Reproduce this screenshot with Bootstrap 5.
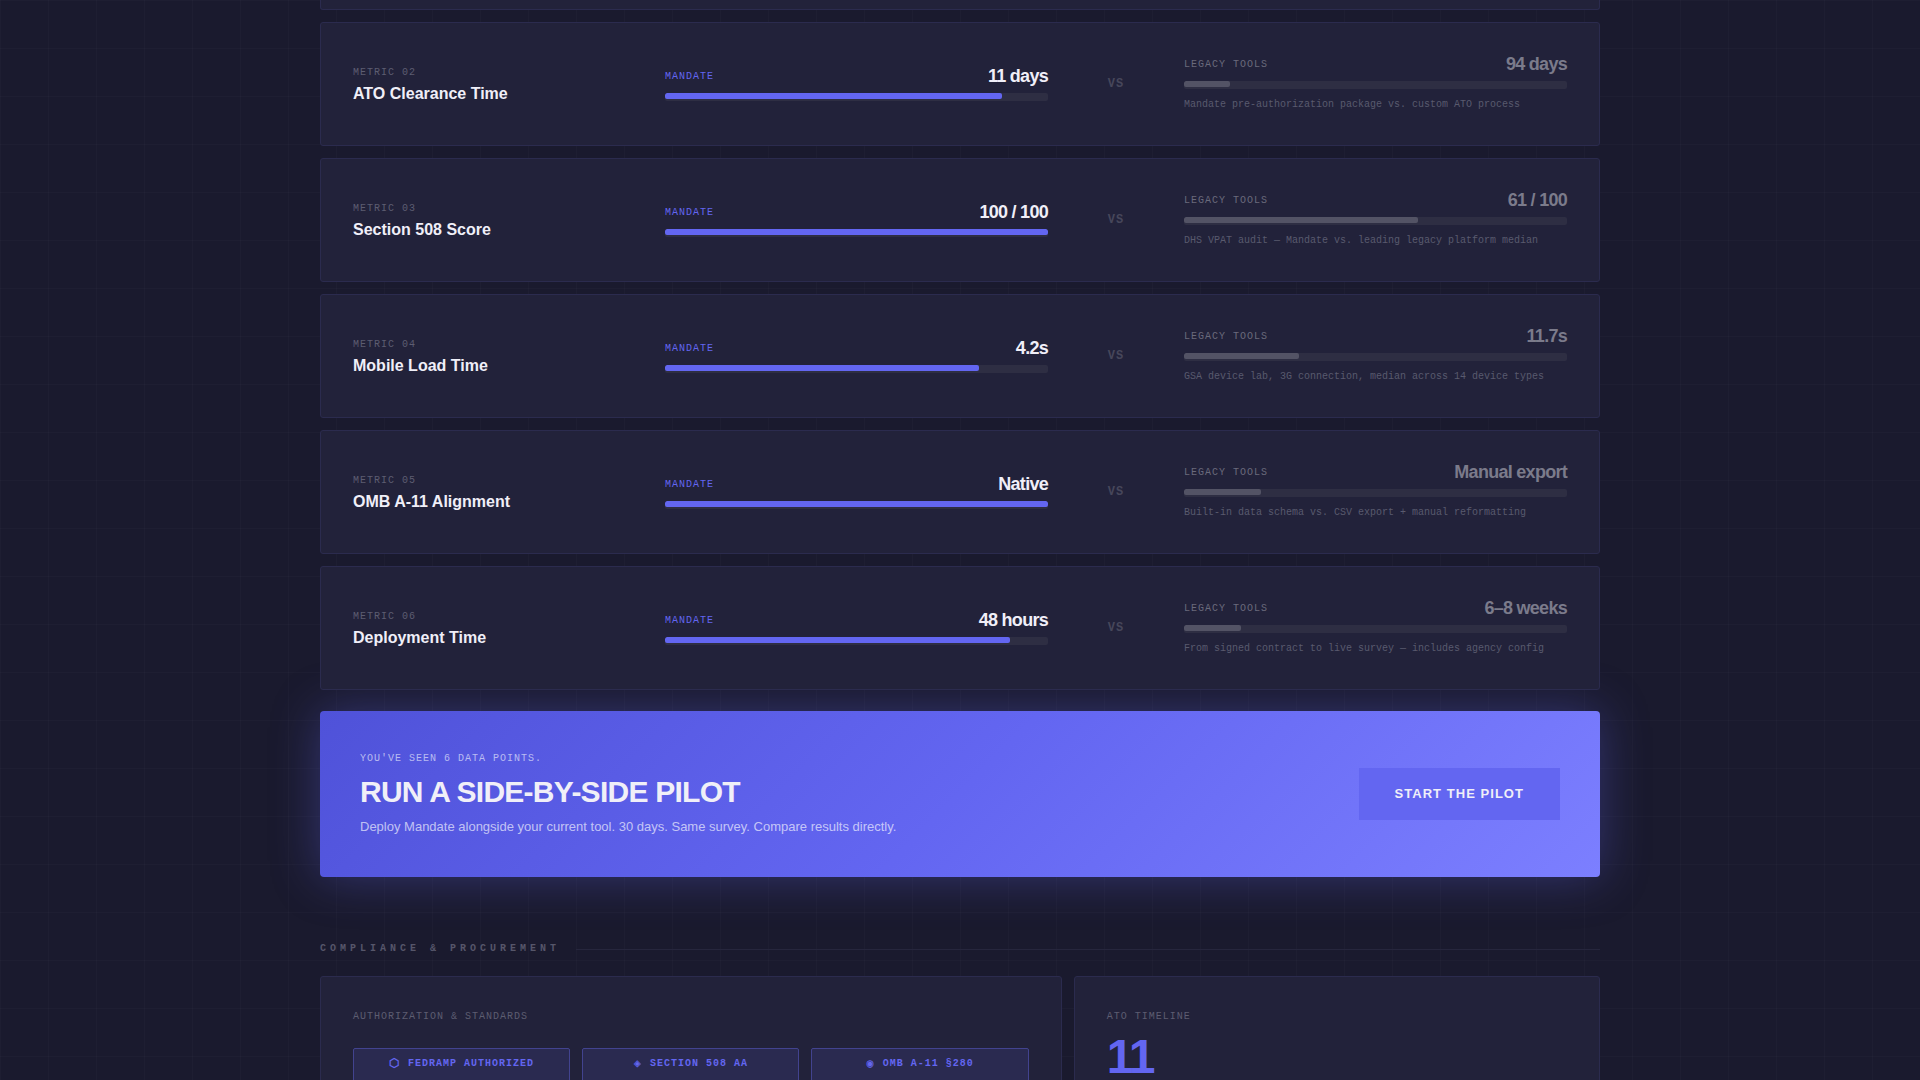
<!DOCTYPE html>
<html lang="en">
<head>
<meta charset="utf-8">
<meta name="viewport" content="width=device-width, initial-scale=1">
<title>Mandate – Benchmarks</title>
<link href="https://cdn.jsdelivr.net/npm/bootstrap@5.3.0/dist/css/bootstrap.min.css" rel="stylesheet">
<style>
  :root { --accent: #6366f1; --ink: #f0eff8; --panel: #22223a; --edge: #2b2b4e; }
  body {
    color: var(--ink);
    background-color: #1a1a2e;
    background-image:
      linear-gradient(rgba(255,255,255,.02) 1px, transparent 1px),
      linear-gradient(90deg, rgba(255,255,255,.02) 1px, transparent 1px);
    background-size: 48px 48px;
    font-family: "Liberation Sans", Arial, sans-serif;
    font-size: 16px;
    line-height: 1.6;
    height: 100vh;
    overflow: hidden;
  }
  .page { max-width: 1280px; }
  .mono { font-family: "Liberation Mono", "Courier New", monospace; font-size: 10px; line-height: 16px; }
  .spaced { letter-spacing: 1px; }
  .dim { color: #5d5d71; }
  .panel { background: var(--panel); border: 1px solid var(--edge); border-radius: 3px; padding: 32px; }
  .stack { gap: 12px; }
  .metric { gap: 32px; }
  .metric-tail { height: 10px; border-top: 0; border-radius: 0 0 3px 3px; padding: 0; }
  .metric-name { width: 280px; }
  .metric-name h3 { font-size: 16px; line-height: 18px; font-weight: 700; margin: 4px 0 0; }
  .side { flex: 1 1 0; min-width: 0; }
  .figure-value { font-size: 18px; line-height: 18px; font-weight: 700; letter-spacing: -.04em; }
  .legacy .figure-value { color: #7b7b8b; }
  .legacy .mono { color: #6a6a7c; }
  .legacy .note { color: #595a6e; margin-top: 8px; }
  .track { height: 8px; margin-top: 8px; background: #2e2e43; border-radius: 2px; overflow: hidden; }
  .fill { height: 6px; border-radius: 2px; background: var(--accent); }
  .legacy .fill { background: #535365; }
  .versus { width: 72px; font-size: 12px; letter-spacing: 1px; color: #47475b; font-weight: 700; }
  .accent { color: var(--accent); }
  .cta {
    margin-top: 21px; padding: 40px; border-radius: 4px;
    background: linear-gradient(135deg, #4f52d9 0%, #6366f1 50%, #7c7fff 100%);
    box-shadow: 0 0 48px rgba(99,102,241,.35);
  }
  .cta .mono { color: rgba(255,255,255,.6); }
  .cta h2 { font-size: 30px; line-height: 34px; font-weight: 700; letter-spacing: -.025em; margin: 8px 0; }
  .cta p { font-size: 13px; line-height: 20px; color: rgba(255,255,255,.65); margin: 0; }
  .btn-pilot {
    --bs-btn-color: var(--ink); --bs-btn-bg: var(--accent); --bs-btn-border-color: var(--accent);
    --bs-btn-hover-color: #fff; --bs-btn-hover-bg: #5659e0; --bs-btn-hover-border-color: #5659e0;
    --bs-btn-border-radius: 0; --bs-btn-padding-x: 35px; --bs-btn-padding-y: 15px;
    --bs-btn-font-size: 13px; --bs-btn-font-weight: 700; --bs-btn-line-height: 20px;
    letter-spacing: .08em;
  }
  .section-title { margin: 64px 0 19px; gap: 16px; }
  .section-title h2 { font-weight: 700; letter-spacing: 4px; margin: 0; color: #56566a; }
  .rule { height: 1px; background: #26263d; }
  .pair { --bs-gutter-x: 12px; }
  .badges { gap: 12px; margin-top: 23px; }
  .cert { flex: 1 1 0; gap: 8px; padding: 7px 0 14px; border: 1px solid #42438f; background: #2a2a50; color: var(--accent); font-weight: 700; border-radius: 2px; }
  .cert-mark { font-size: 12px; }
  .big { font-size: 48px; line-height: 48px; font-weight: 700; letter-spacing: -2px; margin-top: 8px; }
</style>
</head>
<body>
<main class="page mx-auto">
  <section class="stack d-flex flex-column" aria-label="Metrics">
    <div class="panel metric-tail"></div>
    <article class="panel metric d-flex align-items-center">
      <div class="metric-name flex-shrink-0"><div class="mono spaced dim">METRIC 02</div><h3>ATO Clearance Time</h3></div>
      <div class="side">
        <div class="d-flex justify-content-between align-items-end"><span class="mono spaced accent">MANDATE</span><span class="figure-value">11 days</span></div>
        <div class="track"><div class="fill" style="width:88%"></div></div>
      </div>
      <div class="versus mono text-center flex-shrink-0">VS</div>
      <div class="side legacy">
        <div class="d-flex justify-content-between align-items-end"><span class="mono spaced">LEGACY TOOLS</span><span class="figure-value">94 days</span></div>
        <div class="track"><div class="fill" style="width:12%"></div></div>
        <div class="mono note">Mandate pre-authorization package vs. custom ATO process</div>
      </div>
    </article>
    <article class="panel metric d-flex align-items-center">
      <div class="metric-name flex-shrink-0"><div class="mono spaced dim">METRIC 03</div><h3>Section 508 Score</h3></div>
      <div class="side">
        <div class="d-flex justify-content-between align-items-end"><span class="mono spaced accent">MANDATE</span><span class="figure-value">100 / 100</span></div>
        <div class="track"><div class="fill" style="width:100%"></div></div>
      </div>
      <div class="versus mono text-center flex-shrink-0">VS</div>
      <div class="side legacy">
        <div class="d-flex justify-content-between align-items-end"><span class="mono spaced">LEGACY TOOLS</span><span class="figure-value">61 / 100</span></div>
        <div class="track"><div class="fill" style="width:61%"></div></div>
        <div class="mono note">DHS VPAT audit — Mandate vs. leading legacy platform median</div>
      </div>
    </article>
    <article class="panel metric d-flex align-items-center">
      <div class="metric-name flex-shrink-0"><div class="mono spaced dim">METRIC 04</div><h3>Mobile Load Time</h3></div>
      <div class="side">
        <div class="d-flex justify-content-between align-items-end"><span class="mono spaced accent">MANDATE</span><span class="figure-value">4.2s</span></div>
        <div class="track"><div class="fill" style="width:82%"></div></div>
      </div>
      <div class="versus mono text-center flex-shrink-0">VS</div>
      <div class="side legacy">
        <div class="d-flex justify-content-between align-items-end"><span class="mono spaced">LEGACY TOOLS</span><span class="figure-value">11.7s</span></div>
        <div class="track"><div class="fill" style="width:30%"></div></div>
        <div class="mono note">GSA device lab, 3G connection, median across 14 device types</div>
      </div>
    </article>
    <article class="panel metric d-flex align-items-center">
      <div class="metric-name flex-shrink-0"><div class="mono spaced dim">METRIC 05</div><h3>OMB A-11 Alignment</h3></div>
      <div class="side">
        <div class="d-flex justify-content-between align-items-end"><span class="mono spaced accent">MANDATE</span><span class="figure-value">Native</span></div>
        <div class="track"><div class="fill" style="width:100%"></div></div>
      </div>
      <div class="versus mono text-center flex-shrink-0">VS</div>
      <div class="side legacy">
        <div class="d-flex justify-content-between align-items-end"><span class="mono spaced">LEGACY TOOLS</span><span class="figure-value">Manual export</span></div>
        <div class="track"><div class="fill" style="width:20%"></div></div>
        <div class="mono note">Built-in data schema vs. CSV export + manual reformatting</div>
      </div>
    </article>
    <article class="panel metric d-flex align-items-center">
      <div class="metric-name flex-shrink-0"><div class="mono spaced dim">METRIC 06</div><h3>Deployment Time</h3></div>
      <div class="side">
        <div class="d-flex justify-content-between align-items-end"><span class="mono spaced accent">MANDATE</span><span class="figure-value">48 hours</span></div>
        <div class="track"><div class="fill" style="width:90%"></div></div>
      </div>
      <div class="versus mono text-center flex-shrink-0">VS</div>
      <div class="side legacy">
        <div class="d-flex justify-content-between align-items-end"><span class="mono spaced">LEGACY TOOLS</span><span class="figure-value">6–8 weeks</span></div>
        <div class="track"><div class="fill" style="width:15%"></div></div>
        <div class="mono note">From signed contract to live survey — includes agency config</div>
      </div>
    </article>
  </section>

  <section class="cta d-flex justify-content-between align-items-center">
    <div>
      <div class="mono spaced">YOU'VE SEEN 6 DATA POINTS.</div>
      <h2>RUN A SIDE-BY-SIDE PILOT</h2>
      <p>Deploy Mandate alongside your current tool. 30 days. Same survey. Compare results directly.</p>
    </div>
    <button type="button" class="btn btn-pilot">START THE PILOT</button>
  </section>

  <div class="section-title d-flex align-items-center">
    <h2 class="mono">COMPLIANCE &amp; PROCUREMENT</h2>
    <div class="rule flex-fill"></div>
  </div>

  <section class="row pair">
    <div class="col-7">
      <div class="panel h-100">
        <div class="mono spaced dim">AUTHORIZATION &amp; STANDARDS</div>
        <div class="badges d-flex">
          <div class="cert mono spaced d-flex justify-content-center"><span class="cert-mark" aria-hidden="true">⬡</span><span>FEDRAMP AUTHORIZED</span></div>
          <div class="cert mono spaced d-flex justify-content-center"><span class="cert-mark" aria-hidden="true">◈</span><span>SECTION 508 AA</span></div>
          <div class="cert mono spaced d-flex justify-content-center"><span class="cert-mark" aria-hidden="true">◉</span><span>OMB A-11 §280</span></div>
        </div>
      </div>
    </div>
    <div class="col-5">
      <div class="panel h-100">
        <div class="mono spaced dim">ATO TIMELINE</div>
        <div class="big accent">11</div>
      </div>
    </div>
  </section>
</main>
<script src="https://cdn.jsdelivr.net/npm/bootstrap@5.3.0/dist/js/bootstrap.bundle.min.js"></script>
</body>
</html>
